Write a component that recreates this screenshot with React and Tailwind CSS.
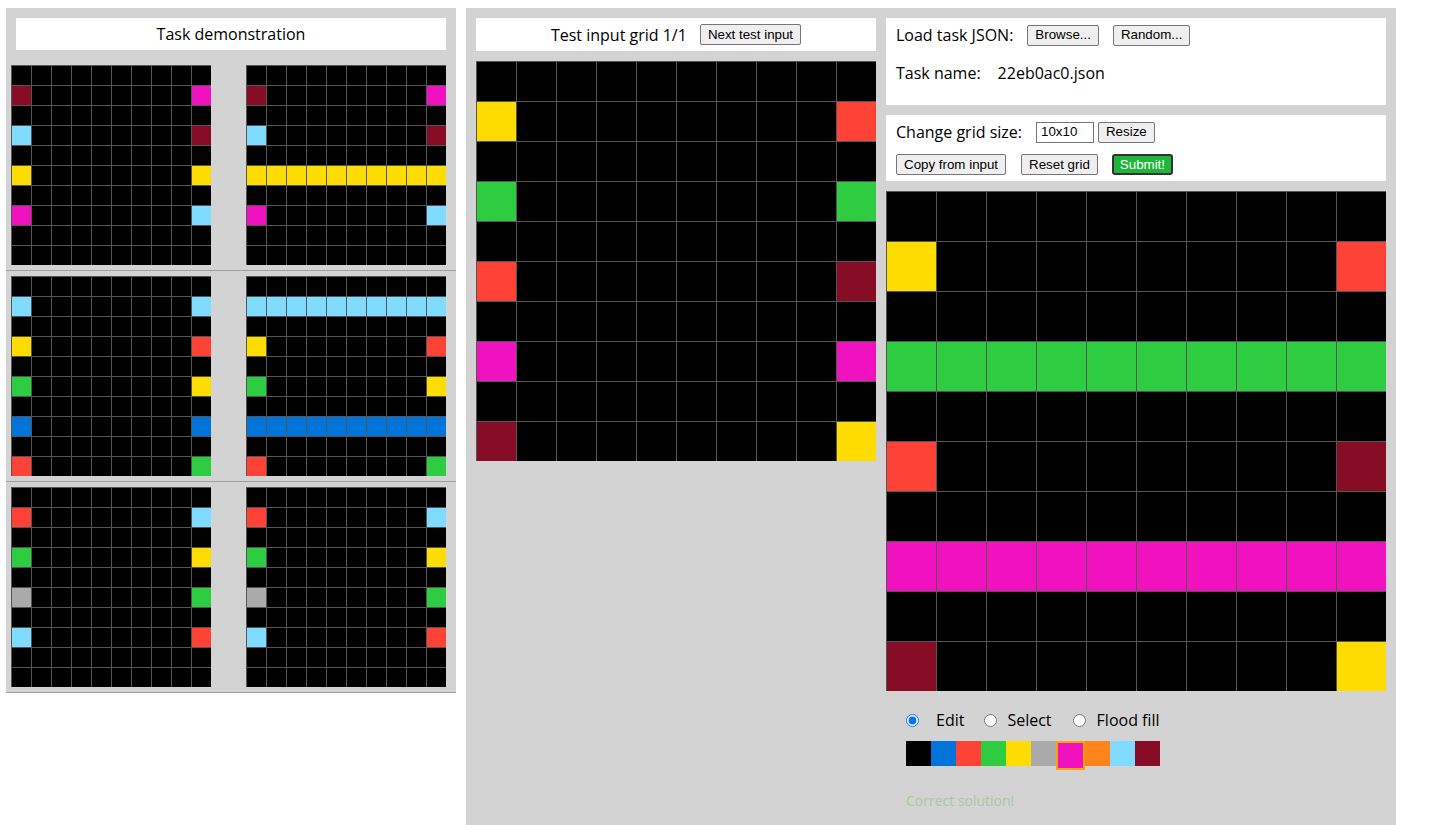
import React from "react";

const COLORS = [
  "bg-[#000000]",
  "bg-[#0074D9]",
  "bg-[#FF4136]",
  "bg-[#2ECC40]",
  "bg-[#FFDC00]",
  "bg-[#AAAAAA]",
  "bg-[#F012BE]",
  "bg-[#FF851B]",
  "bg-[#7FDBFF]",
  "bg-[#870C25]",
];

function makeGrid(edges, fullRows = {}) {
  const g = [];
  for (let r = 0; r < 10; r++) {
    const row = new Array(10).fill(0);
    if (edges[r]) {
      row[0] = edges[r][0];
      row[9] = edges[r][1];
    }
    if (fullRows[r] !== undefined) row.fill(fullRows[r]);
    g.push(row);
  }
  return g;
}

const p1 = { 1: [9, 6], 3: [8, 9], 5: [4, 4], 7: [6, 8] };
const p2 = { 1: [8, 8], 3: [4, 2], 5: [3, 4], 7: [1, 1], 9: [2, 3] };
const p3 = { 1: [2, 8], 3: [3, 4], 5: [5, 3], 7: [8, 2] };
const t = { 1: [4, 2], 3: [3, 3], 5: [2, 9], 7: [6, 6], 9: [9, 4] };

const PAIRS = [
  [makeGrid(p1), makeGrid(p1, { 5: 4 })],
  [makeGrid(p2), makeGrid(p2, { 1: 8, 7: 1 })],
  [makeGrid(p3), makeGrid(p3)],
];
const TEST_IN = makeGrid(t);
const TEST_OUT = makeGrid(t, { 3: 3, 7: 6 });

const SIZES = {
  20: { wrap: "w-[200px] h-[200px]", cell: "w-[20px] h-[20px]" },
  40: { wrap: "w-[400px] h-[400px]", cell: "w-[40px] h-[40px]" },
  50: { wrap: "w-[500px] h-[500px]", cell: "w-[50px] h-[50px]" },
};

function Grid({ data, size }) {
  const s = SIZES[size];
  return (
    <div className={`grid grid-cols-10 shrink-0 ${s.wrap}`}>
      {data.flat().map((v, i) => (
        <div
          key={i}
          className={`${s.cell} border-l border-t border-[#555555] box-border ${COLORS[v]}`}
        />
      ))}
    </div>
  );
}

function Btn({ children, className = "" }) {
  return (
    <button
      className={`h-[21px] px-[7px] bg-[#efefef] border border-[#767676] rounded-[2px] text-[13.33px] leading-none text-black font-['Liberation_Sans',Arial,sans-serif] ${className}`}
    >
      {children}
    </button>
  );
}

export default function App() {
  const sans = "font-['Open_Sans',sans-serif]";
  return (
    <div
      className={`w-[1433px] h-[825px] overflow-hidden bg-white flex items-start pl-[6px] pt-[8px] gap-[10px] text-[16px] text-black ${sans}`}
    >
      {/* Demonstration panel */}
      <div className="w-[450px] bg-[#d3d3d3] shrink-0">
        <div className="m-[10px] h-[32px] bg-white flex items-center justify-center">
          Task demonstration
        </div>
        {PAIRS.map((pair, i) => (
          <div
            key={i}
            className="flex pl-[5px] py-[5px] border-b border-[#a0a0a0]"
          >
            <Grid data={pair[0]} size={20} />
            <div className="w-[35px]" />
            <Grid data={pair[1]} size={20} />
          </div>
        ))}
      </div>

      {/* Evaluation panel */}
      <div className="w-[930px] h-[817px] bg-[#d3d3d3] shrink-0 flex p-[10px] gap-[10px]">
        <div className="w-[400px] flex flex-col gap-[10px]">
          <div className="h-[33px] bg-white flex items-center justify-center gap-[13px]">
            <span>Test input grid 1/1</span>
            <Btn>Next test input</Btn>
          </div>
          <Grid data={TEST_IN} size={40} />
        </div>

        <div className="w-[500px] flex flex-col">
          <div className="h-[87px] bg-white pl-[10px] pt-[5px] flex flex-col">
            <div className="flex items-center h-[24px]">
              <span>Load task JSON:</span>
              <Btn className="ml-[14px]">Browse...</Btn>
              <Btn className="ml-[14px]">Random...</Btn>
            </div>
            <div className="flex items-center h-[24px] mt-[14px]">
              <span>Task name:</span>
              <span className="ml-[17px]">22eb0ac0.json</span>
            </div>
          </div>

          <div className="h-[66px] bg-white mt-[10px] pl-[10px] pt-[6px] flex flex-col">
            <div className="flex items-center h-[22px]">
              <span>Change grid size:</span>
              <div className="ml-[14px] w-[58px] h-[21px] border border-[#767676] bg-white text-[13.33px] font-['Liberation_Sans',Arial,sans-serif] flex items-center pl-[4px] leading-none">
                10x10
              </div>
              <Btn className="ml-[4px]">Resize</Btn>
            </div>
            <div className="flex items-center mt-[11px] h-[21px]">
              <Btn className="px-[6px]">Copy from input</Btn>
              <Btn className="ml-[15px]">Reset grid</Btn>
              <button className="ml-[14px] h-[21px] px-[6px] bg-[#1fb53a] border-2 border-[#333333] rounded-[3px] text-[13.33px] leading-none text-white font-['Liberation_Sans',Arial,sans-serif]">
                Submit!
              </button>
            </div>
          </div>

          <div className="mt-[10px]">
            <Grid data={TEST_OUT} size={50} />
          </div>

          <div className="pl-[20px] pt-[20px] flex items-center h-[18px] box-content">
            <input
              type="radio"
              name="mode"
              defaultChecked
              className="m-0 w-[13px] h-[13px] accent-[#0075ff]"
            />
            <span className="ml-[17px]">Edit</span>
            <input type="radio" name="mode" className="m-0 ml-[20px] w-[13px] h-[13px]" />
            <span className="ml-[10px]">Select</span>
            <input type="radio" name="mode" className="m-0 ml-[21px] w-[13px] h-[13px]" />
            <span className="ml-[11px]">Flood fill</span>
          </div>

          <div className="pl-[20px] mt-[12px] flex items-start">
            {COLORS.map((c, i) =>
              i === 6 ? (
                <div
                  key={i}
                  className={`w-[29px] h-[29px] border-2 border-[#ffa500] ${c}`}
                />
              ) : (
                <div key={i} className={`w-[25px] h-[25px] ${c}`} />
              )
            )}
          </div>

          <div className="pl-[20px] mt-[21px] text-[14px] text-[#a9c9a2] leading-[20px]">
            Correct solution!
          </div>
        </div>
      </div>
    </div>
  );
}
